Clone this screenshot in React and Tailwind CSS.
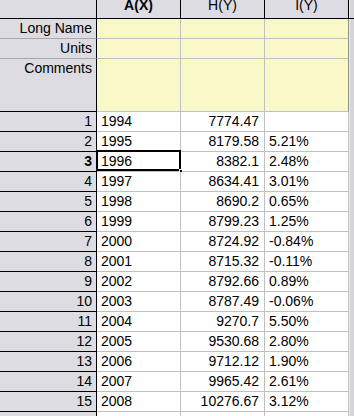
import React from "react";

const rows = [
  ["1", "1994", "7774.47", ""],
  ["2", "1995", "8179.58", "5.21%"],
  ["3", "1996", "8382.1", "2.48%"],
  ["4", "1997", "8634.41", "3.01%"],
  ["5", "1998", "8690.2", "0.65%"],
  ["6", "1999", "8799.23", "1.25%"],
  ["7", "2000", "8724.92", "-0.84%"],
  ["8", "2001", "8715.32", "-0.11%"],
  ["9", "2002", "8792.66", "0.89%"],
  ["10", "2003", "8787.49", "-0.06%"],
  ["11", "2004", "9270.7", "5.50%"],
  ["12", "2005", "9530.68", "2.80%"],
  ["13", "2006", "9712.12", "1.90%"],
  ["14", "2007", "9965.42", "2.61%"],
  ["15", "2008", "10276.67", "3.12%"],
  ["16", "2009", "10035.09", "0.00%"],
];

function HeaderRow() {
  return (
    <div className="flex h-[19px] border-b border-black bg-[#dcdce2]">
      <div className="w-[97px] shrink-0 border-r border-black" />
      <div className="w-[84px] shrink-0 border-r border-black overflow-hidden text-center font-bold">
        <div className="-mt-[4px]">A(X)</div>
      </div>
      <div className="w-[84px] shrink-0 border-r border-black overflow-hidden text-center">
        <div className="-mt-[4px]">H(Y)</div>
      </div>
      <div className="w-[84px] shrink-0 border-r border-black overflow-hidden text-center">
        <div className="-mt-[4px]">I(Y)</div>
      </div>
      <div className="flex-1 bg-[#d6d6da] border-l border-[#ececec]" />
    </div>
  );
}

function MetaRow({ label, h, dark }) {
  return (
    <div className={`flex ${h}`}>
      <div
        className={`w-[97px] shrink-0 border-r border-r-black border-b ${dark ? "border-b-black" : "border-b-[#a8a8ae]"} bg-[#dcdce2] text-right pr-[4px]`}
      >
        {label}
      </div>
      <div className="w-[84px] shrink-0 border-r border-b border-[#c0c0c0] bg-[#f9f8c9]" />
      <div className="w-[84px] shrink-0 border-r border-b border-[#c0c0c0] bg-[#f9f8c9]" />
      <div className="w-[84px] shrink-0 border-r border-r-[#909090] border-b border-b-[#c0c0c0] bg-[#f9f8c9]" />
      <div className="flex-1 bg-[#d6d6da] border-l border-[#ececec]" />
    </div>
  );
}

function DataRow({ r }) {
  const sel = r[0] === "3";
  return (
    <div className="flex h-[20px] shrink-0">
      <div
        className={`w-[97px] shrink-0 border-r border-b border-black bg-[#dcdce2] text-right pr-[4px] ${sel ? "font-bold" : ""}`}
      >
        {r[0]}
      </div>
      <div className="relative w-[84px] shrink-0 border-r border-b border-[#c0c0c0] bg-white pl-[4px]">
        {r[1]}
        {sel && (
          <>
            <div className="absolute -top-[2px] -left-[1px] w-[85px] h-[21px] border-2 border-black" />
            <div className="absolute top-[17px] left-[82px] w-[4px] h-[4px] bg-black border border-white" />
          </>
        )}
      </div>
      <div className="w-[84px] shrink-0 border-r border-b border-[#c0c0c0] bg-white text-right pr-[5px]">
        {r[2]}
      </div>
      <div className="w-[84px] shrink-0 border-r border-b border-[#c0c0c0] bg-white pl-[4px]">
        {r[3]}
      </div>
      <div className="flex-1 bg-[#d6d6da] border-l border-[#ececec]" />
    </div>
  );
}

export default function App() {
  return (
    <div
      className="w-[354px] h-[416px] overflow-hidden bg-white text-black text-[14px] leading-[19px]"
      style={{ fontFamily: '"Liberation Sans", Arial, sans-serif' }}
    >
      <HeaderRow />
      <MetaRow label="Long Name" h="h-[20px]" />
      <MetaRow label="Units" h="h-[20px]" />
      <MetaRow label="Comments" h="h-[53px]" dark />
      {rows.map((r) => (
        <DataRow key={r[0]} r={r} />
      ))}
    </div>
  );
}
